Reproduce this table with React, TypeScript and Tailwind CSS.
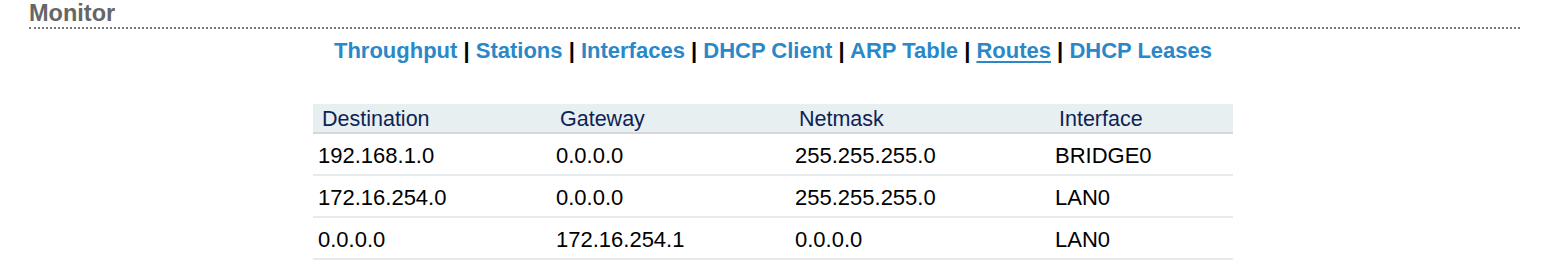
import React from 'react';

const tabs = ['Throughput', 'Stations', 'Interfaces', 'DHCP Client', 'ARP Table', 'Routes', 'DHCP Leases'];

const routes = [
  { destination: '192.168.1.0', gateway: '0.0.0.0', netmask: '255.255.255.0', iface: 'BRIDGE0' },
  { destination: '172.16.254.0', gateway: '0.0.0.0', netmask: '255.255.255.0', iface: 'LAN0' },
  { destination: '0.0.0.0', gateway: '172.16.254.1', netmask: '0.0.0.0', iface: 'LAN0' },
];

const App: React.FC = () => {
  return (
    <div className="min-h-[270px] bg-white font-['Liberation_Sans',Arial,sans-serif]">
      <div className="pl-[29px] pr-[26px]">
        <h1 className="text-[23.5px] leading-[26px] font-bold text-[#666666]">Monitor</h1>
        <div className="border-b-2 border-dotted border-[#777777] mt-[1px]" />
      </div>

      <div className="mt-[8px] text-center text-[22px] leading-[28px] font-bold">
        {tabs.map((tab, i) => (
          <React.Fragment key={tab}>
            {i > 0 && <span className="text-black"> | </span>}
            <a
              href="#"
              className={`text-[#2b88c8] ${tab === 'Routes' ? 'underline underline-offset-[3px]' : 'no-underline'}`}
            >
              {tab}
            </a>
          </React.Fragment>
        ))}
      </div>

      <table className="mx-auto mt-[39px] w-[920px] border-collapse text-left">
        <thead>
          <tr className="bg-[#e8eff1] border-b-2 border-[#d2d8dc]">
            <th className="w-[238px] pl-[9px] h-[29px] pt-[1px] text-[21.5px] leading-[24px] font-normal text-[#0d2356]">Destination</th>
            <th className="w-[239px] pl-[9px] pt-[1px] text-[21.5px] leading-[24px] font-normal text-[#0d2356]">Gateway</th>
            <th className="w-[260px] pl-[9px] pt-[1px] text-[21.5px] leading-[24px] font-normal text-[#0d2356]">Netmask</th>
            <th className="pl-[9px] pt-[1px] text-[21.5px] leading-[24px] font-normal text-[#0d2356]">Interface</th>
          </tr>
        </thead>
        <tbody>
          {routes.map((r) => (
            <tr key={r.destination} className="border-b-2 border-[#e6ecee]">
              <td className="h-[42px] pl-[5px] pt-[3px] text-[22px] leading-[24px] text-black">{r.destination}</td>
              <td className="pl-[5px] pt-[3px] text-[22px] leading-[24px] text-black">{r.gateway}</td>
              <td className="pl-[5px] pt-[3px] text-[22px] leading-[24px] text-black">{r.netmask}</td>
              <td className="pl-[5px] pt-[3px] text-[22px] leading-[24px] text-black">{r.iface}</td>
            </tr>
          ))}
        </tbody>
      </table>
    </div>
  );
};

export default App;
